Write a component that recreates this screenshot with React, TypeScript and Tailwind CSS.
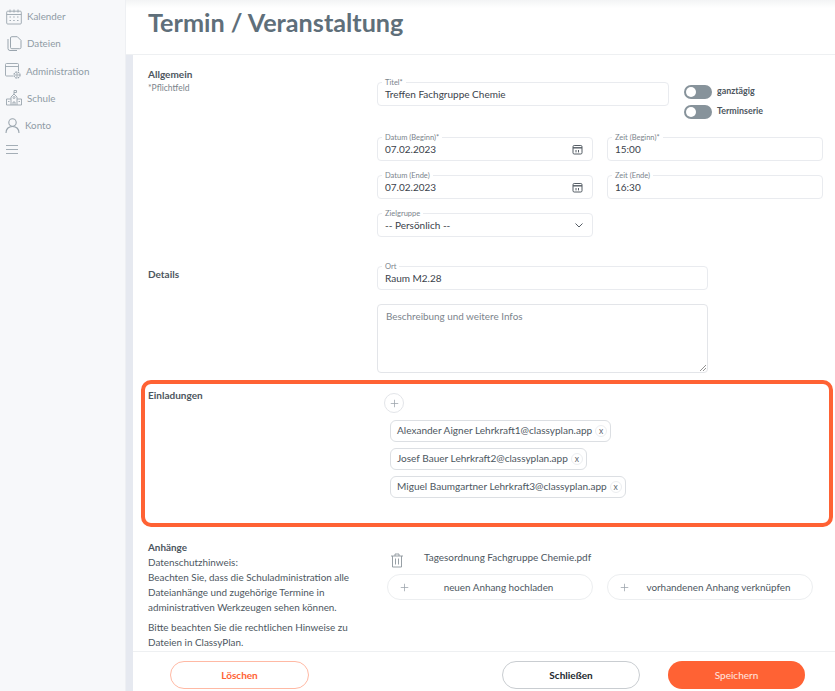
import React from "react";

const Field = ({ label, value, className = "", icon }: { label: string; value: string; className?: string; icon?: React.ReactNode }) => (
  <div className={`relative h-6 rounded-[4px] border border-[#e9ebef] flex items-center justify-between pl-[7px] pr-[9px] text-[10px] text-[#3a424b] bg-white ${className}`}>
    <span className="absolute -top-[5px] left-[4px] bg-white px-[3px] text-[7.5px] leading-[9px] text-[#7b848c]">{label}</span>
    <span>{value}</span>
    {icon}
  </div>
);

const Cal = () => (
  <svg width="11" height="11" viewBox="0 0 11 11" fill="none" stroke="#555d65" strokeWidth="1">
    <rect x="1" y="1.5" width="9" height="8.5" rx="1.2" />
    <path d="M1 3.800h9" strokeWidth="1.4" />
    <path d="M4 6v2.400M6.500 6v2.400" />
  </svg>
);

const Toggle = ({ label }: { label: string }) => (
  <div className="flex items-center gap-[5px] h-[14px]">
    <div className="w-7 h-[14px] rounded-full bg-[#87939b] flex items-center pl-[2px]">
      <div className="w-[10px] h-[10px] rounded-full bg-white" />
    </div>
    <span className="text-[8.9px] font-bold text-[#4d565e] -mt-[2px]">{label}</span>
  </div>
);

const Chip = ({ text }: { text: string }) => (
  <div className="h-[22px] self-start rounded-[6px] border border-[#dcdfe3] flex items-center pl-[6px] pr-[3px] text-[10.05px] text-[#4d5761]">
    <span>{text}</span>
    <span className="ml-[3px] w-[12px] h-[12px] rounded-full border border-[#eceef0] flex items-center justify-center text-[8.5px] leading-none text-[#5c646c]">x</span>
  </div>
);

const Plus = ({ size = 12 }: { size?: number }) => (
  <svg width={size} height={size} viewBox="0 0 12 12" stroke="#9aa2a9" strokeWidth="1" fill="none">
    <path d="M6 1v10M1 6h10" />
  </svg>
);

const NavRow = ({ label, icon, className = "" }: { label: string; icon: React.ReactNode; className?: string }) => (
  <div className={`h-[27.2px] flex items-center text-[9.8px] text-[#8f9ba5] ${className}`}>
    <span className="w-[26px] flex justify-center shrink-0 ml-[1px]">{icon}</span>
    <span>{label}</span>
  </div>
);

const I = "#9aa5ae";

export default function App() {
  return (
    <div className="w-[835px] h-[691px] flex overflow-hidden bg-white font-['Lato',sans-serif]">
      <aside className="w-[126px] shrink-0 bg-[#f7f8fa] pt-[3px] border-r border-[#eef0f3]">
        <NavRow label="Kalender" icon={
          <svg width="16" height="16" viewBox="0 0 16 16" fill="none" stroke={I} strokeWidth="0.9">
            <rect x="0.7" y="2.200" width="14.600" height="12.800" rx="1" />
            <path d="M0.700 5.500h14.600M4 0.500v3M8 0.500v3M12 0.500v3" />
            <path d="M3.500 8h1.500M7.200 8h1.500M11 8h1.500M3.500 11.500h1.500M7.200 11.500h1.500M11 11.500h1.500" />
          </svg>
        } />
        <NavRow label="Dateien" icon={
          <svg width="15" height="15" viewBox="0 0 15 15" fill="none" stroke={I} strokeWidth="1">
            <path d="M1 3v9.500a2 2 0 0 0 2 2h7" />
            <path d="M3.500 2a1.300 1.300 0 0 1 1.300-1.300h5.500l3.700 3.700v7a1.300 1.300 0 0 1-1.300 1.300H4.800a1.300 1.300 0 0 1-1.300-1.300z" />
          </svg>
        } />
        <NavRow className="-ml-[1px]" label="Administration" icon={
          <svg width="16" height="16" viewBox="0 0 16 16" fill="none" stroke={I} strokeWidth="0.9">
            <path d="M8 13H1.500a1 1 0 0 1-1-1V1.500a1 1 0 0 1 1-1h11a1 1 0 0 1 1 1V8" />
            <path d="M0.500 3.500h13" />
            <circle cx="12" cy="12" r="1.200" />
            <circle cx="12" cy="12" r="3" strokeDasharray="1.600 0.800" strokeWidth="1.300" />
          </svg>
        } />
        <NavRow label="Schule" icon={
          <svg width="16" height="16" viewBox="0 0 16 16" fill="none" stroke={I} strokeWidth="0.9">
            <path d="M8 4V0.500h2.500v2H8" />
            <path d="M5 15V7l3-3 3 3v8" />
            <path d="M5 9H0.500v6h15V9H11" />
            <circle cx="8" cy="7.500" r="1" />
            <path d="M7 15v-3h2v3M2 11.500h1.500M12.500 11.500H14" />
          </svg>
        } />
        <NavRow className="-ml-[2px]" label="Konto" icon={
          <svg width="15" height="15" viewBox="0 0 15 15" fill="none" stroke={I} strokeWidth="1.100">
            <circle cx="7.500" cy="4.500" r="3.700" />
            <path d="M1 15c0-4 2.500-6.500 6.500-6.500S14 11 14 15" />
          </svg>
        } />
        <div className="h-[22px] flex items-center pl-[6px]">
          <svg width="12" height="9" viewBox="0 0 12 9" stroke={I} strokeWidth="0.9"><path d="M0 .5h12M0 4.500h12M0 8.500h12" /></svg>
        </div>
      </aside>

      <main className="flex-1 flex flex-col min-w-0">
        <header className="h-[55px] shrink-0 border-b border-[#eef0f2] pl-[22px] bg-gradient-to-b from-[#f3f4f5] to-white to-[8px]">
          <h1 className="text-[25.2px] leading-[45px] font-bold text-[#5f6f7a]">Termin / Veranstaltung</h1>
        </header>

        <div className="flex-1 flex min-h-0">
          <div className="w-[7px] shrink-0 bg-[#e6e9f0]" />
          <div className="flex-1 min-w-0 overflow-hidden text-[#4d5761]">
            {/* Allgemein */}
            <section className="flex h-[204px]">
              <div className="w-[244px] pl-[15px] pt-[13px] shrink-0">
                <div className="text-[10px] leading-[12px] font-bold text-[#4d565e]">Allgemein</div>
                <div className="text-[8.5px] leading-[16px] text-[#7b848c]">*Pflichtfeld</div>
              </div>
              <div className="flex-1 pt-[27px]">
                <div className="flex">
                  <Field label="Titel*" value="Treffen Fachgruppe Chemie" className="w-[292px]" />
                  <div className="ml-[15px] mt-[3px] flex flex-col gap-[6px]">
                    <Toggle label="ganztägig" />
                    <Toggle label="Terminserie" />
                  </div>
                </div>
                <div className="grid grid-cols-[216px_216px] gap-x-[14px] gap-y-[14px] mt-[18px]">
                  <Field label="Datum (Beginn)*" value="07.02.2023" icon={<Cal />} />
                  <Field label="Zeit (Beginn)*" value="15:00" />
                  <Field label="Datum (Ende)" value="07.02.2023" icon={<Cal />} />
                  <Field label="Zeit (Ende)" value="16:30" />
                  <Field label="Zielgruppe" value="-- Persönlich --" icon={
                    <svg width="8" height="5" viewBox="0 0 8 5" fill="none" stroke="#555d65" strokeWidth="1"><path d="M.5.500 4 4 7.500.5" /></svg>
                  } />
                </div>
              </div>
            </section>

            {/* Details */}
            <section className="flex h-[121px]">
              <div className="w-[244px] pl-[15px] pt-[9px] shrink-0">
                <div className="text-[10px] leading-[12px] font-bold text-[#4d565e]">Details</div>
              </div>
              <div className="flex-1 pt-[7px]">
                <Field label="Ort" value="Raum M2.28" className="w-[331px]" />
                <div className="relative mt-[14px] w-[331px] h-[69px] rounded-[4px] border border-[#e3e5e9] pl-[8px] pt-[4px] text-[9.9px] text-[#7b848c]">
                  Beschreibung und weitere Infos
                  <svg className="absolute right-px bottom-px" width="6" height="6" viewBox="0 0 6 6" stroke="#666" strokeWidth="0.7"><path d="M0 6 6 0M3 6l3-3" /></svg>
                </div>
              </div>
            </section>

            {/* Einladungen */}
            <section className="ml-[8px] w-[692px] h-[147px] rounded-[10px] border-[4px] border-[#ff6234] flex">
              <div className="w-[245px] shrink-0 pl-[3px] pt-[5px]">
                <div className="text-[10px] leading-[12px] font-bold text-[#4d565e]">Einladungen</div>
              </div>
              <div className="pt-[9px] flex flex-col gap-[6px]">
                <div className="w-5 h-5 rounded-full border border-[#e3e5e9] flex items-center justify-center mb-[1px] -ml-[6px]">
                  <Plus size={9} />
                </div>
                <Chip text="Alexander Aigner Lehrkraft1@classyplan.app" />
                <Chip text="Josef Bauer Lehrkraft2@classyplan.app" />
                <Chip text="Miguel Baumgartner Lehrkraft3@classyplan.app" />
              </div>
            </section>

            {/* Anhänge */}
            <section className="flex pt-[13px]">
              <div className="w-[244px] pl-[15px] pr-[8px] shrink-0 text-[9.9px] leading-[15px]">
                <div className="font-bold text-[#4d565e]">Anhänge</div>
                <div>Datenschutzhinweis:</div>
                <div className="whitespace-nowrap">Beachten Sie, dass die Schuladministration alle</div>
                <div>Dateianhänge und zugehörige Termine in</div>
                <div>administrativen Werkzeugen sehen können.</div>
                <div className="mt-[5px] whitespace-nowrap">Bitte beachten Sie die rechtlichen Hinweise zu</div>
                <div>Dateien in ClassyPlan.</div>
              </div>
              <div className="pl-[10px] pt-[12px]">
                <div className="flex items-center h-[17px] pl-[4px] text-[9.96px]">
                  <svg width="12" height="15" viewBox="0 0 12 15" fill="none" stroke="#8c959c" strokeWidth="0.9">
                    <path d="M0 3h12M4 3V1h4v2M1.500 3v11h9V3M4.500 5.500v6M7.500 5.500v6" />
                  </svg>
                  <span className="ml-[21px] -mt-[6px]">Tagesordnung Fachgruppe Chemie.pdf</span>
                </div>
                <div className="flex gap-[14px] mt-[5px]">
                  {["neuen Anhang hochladen", "vorhandenen Anhang verknüpfen"].map((t) => (
                    <div key={t} className="w-[206px] h-[26px] rounded-full border border-[#eceef0] flex items-center pl-[12px] text-[9.9px]">
                      <Plus size={9} />
                      <span className="flex-1 text-center pr-[4px]">{t}</span>
                    </div>
                  ))}
                </div>
              </div>
            </section>
          </div>
        </div>

        <footer className="relative h-[40px] shrink-0 ml-[7px] -mt-[40px] bg-white border-t border-[#eef0f2] flex items-start pt-[9px] pl-[37px] text-[10px] font-bold">
          <button className="w-[139px] h-[28px] rounded-full border border-[#ffb9a4] text-[#ff6234]">Löschen</button>
          <button className="ml-[193px] w-[138px] h-[28px] rounded-full border border-[#c9cdd1] text-[#22282e]">Schließen</button>
          <button className="ml-[28px] w-[137px] h-[28px] rounded-full bg-[#ff6234] text-white/85 font-normal">Speichern</button>
        </footer>
      </main>
    </div>
  );
}
